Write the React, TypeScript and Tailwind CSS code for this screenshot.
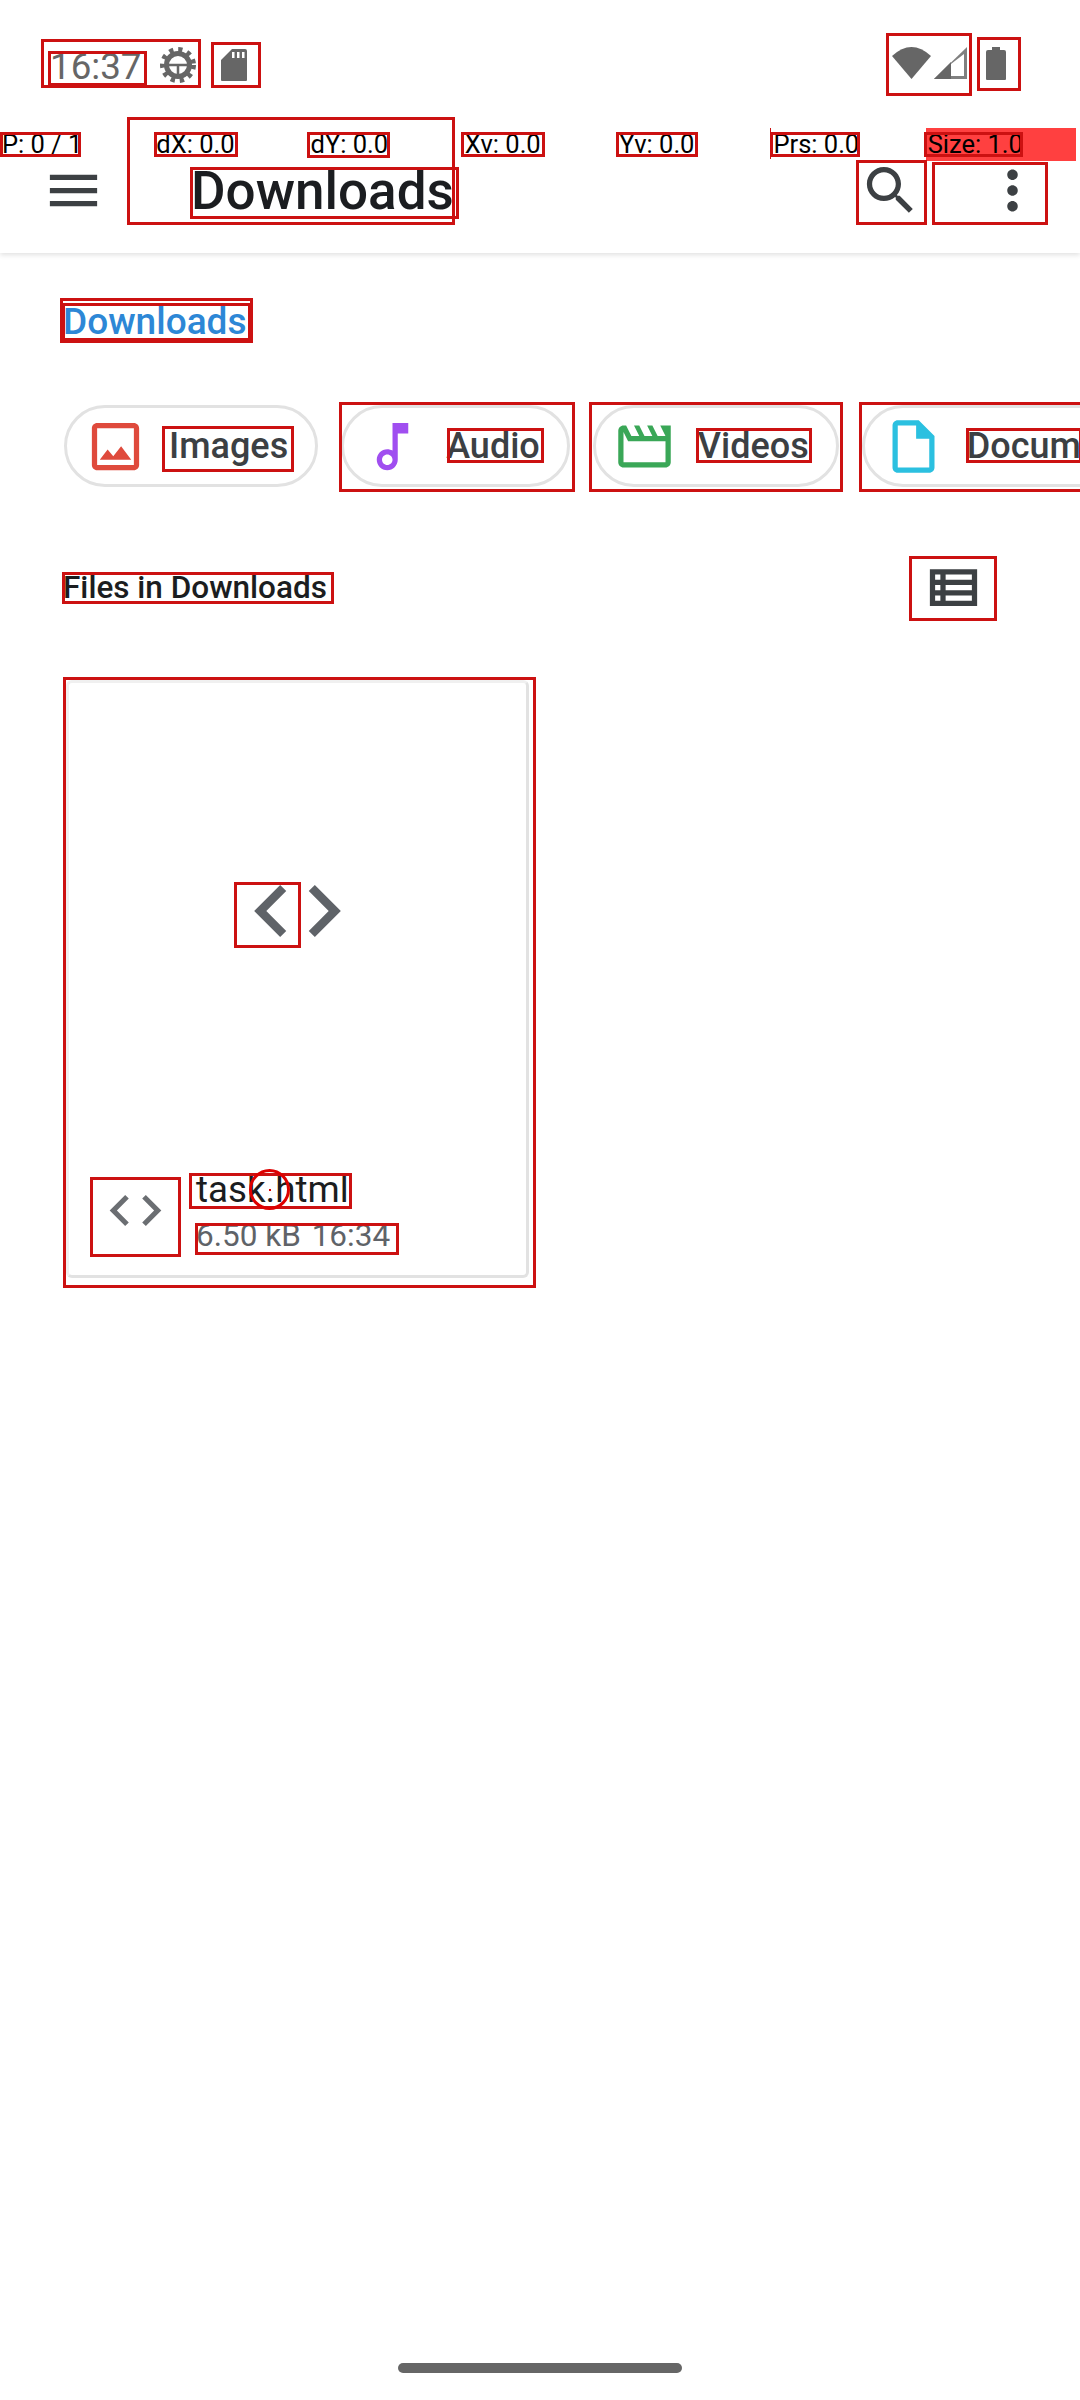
import React from "react";

const Icon: React.FC<{ d: string; className: string; box?: string }> = ({ d, className, box = "0 0 24 24" }) => (
  <svg viewBox={box} className={className} fill="currentColor">
    <path d={d} />
  </svg>
);

const CODE = "M9.4 16.6L4.8 12l4.6-4.6L8 6l-6 6 6 6 1.4-1.4zm5.2 0l4.6-4.6-4.6-4.6L16 6l6 6-6 6-1.4-1.4z";

const chips = [
  {
    label: "Images",
    color: "text-[#df4a3c]",
    d: "M19 5v14H5V5h14m0-2H5c-1.1 0-2 .9-2 2v14c0 1.1.9 2 2 2h14c1.1 0 2-.9 2-2V5c0-1.1-.9-2-2-2zM14.14 11.86l-3 3.87L9 13.14 6 17h12l-3.86-5.14z",
  },
  {
    label: "Audio",
    color: "text-[#a04ef0]",
    d: "M12 3l.01 10.55c-.59-.34-1.27-.55-2-.55C7.79 13 6 14.79 6 17s1.79 4 4 4 4-1.79 4-4V7h4V3h-6zm-1.99 16c-1.1 0-2-.9-2-2s.9-2 2-2 2 .9 2 2-.9 2-2 2z",
  },
  {
    label: "Videos",
    color: "text-[#3aa757]",
    d: "M4 6.47L5.76 10H20v8H4V6.47M22 4h-4l2 4h-3l-2-4h-2l2 4h-3l-2-4H8l2 4H7L5 4H4c-1.1 0-1.99.9-1.99 2L2 18c0 1.1.9 2 2 2h16c1.1 0 2-.9 2-2V4z",
  },
  {
    label: "Documents",
    color: "text-[#2bc0e0]",
    d: "M14 2H6c-1.1 0-1.99.9-1.99 2L4 20c0 1.1.89 2 1.99 2H18c1.1 0 2-.9 2-2V8l-6-6zM6 20V4h7v5h5v11H6z",
  },
];

const pointerCells = ["P: 0 / 1", "dX: 0.0", "dY: 0.0", "Xv: 0.0", "Yv: 0.0", "Prs: 0.0"];

// layout bounds drawn over the page
const boundsBoxes = [
  "left-[41px] top-[39px] w-[160px] h-[49px]",
  "left-[48px] top-[51px] w-[99px] h-[35px]",
  "left-[211px] top-[42px] w-[50px] h-[46px]",
  "left-[886px] top-[33px] w-[86px] h-[63px]",
  "left-[977px] top-[37px] w-[44px] h-[54px]",
  "left-[0px] top-[132px] w-[81px] h-[25px]",
  "left-[154px] top-[132px] w-[84px] h-[25px]",
  "left-[307px] top-[132px] w-[83px] h-[26px]",
  "left-[461px] top-[132px] w-[84px] h-[25px]",
  "left-[616px] top-[132px] w-[82px] h-[25px]",
  "left-[770px] top-[132px] w-[90px] h-[25px]",
  "left-[924px] top-[132px] w-[99px] h-[25px]",
  "left-[127px] top-[117px] w-[328px] h-[108px]",
  "left-[190px] top-[167px] w-[269px] h-[52px]",
  "left-[856px] top-[160px] w-[71px] h-[65px]",
  "left-[932px] top-[162px] w-[116px] h-[63px]",
  "left-[60px] top-[298px] w-[193px] h-[45px]",
  "left-[62px] top-[303px] w-[189px] h-[38px]",
  "left-[162px] top-[426px] w-[132px] h-[46px]",
  "left-[339px] top-[402px] w-[236px] h-[90px]",
  "left-[447px] top-[428px] w-[97px] h-[35px]",
  "left-[589px] top-[402px] w-[254px] h-[90px]",
  "left-[696px] top-[428px] w-[116px] h-[35px]",
  "left-[859px] top-[402px] w-[224px] h-[90px]",
  "left-[966px] top-[428px] w-[116px] h-[35px]",
  "left-[62px] top-[572px] w-[272px] h-[32px]",
  "left-[909px] top-[556px] w-[88px] h-[65px]",
  "left-[63px] top-[677px] w-[473px] h-[611px]",
  "left-[234px] top-[882px] w-[67px] h-[66px]",
  "left-[90px] top-[1177px] w-[91px] h-[80px]",
  "left-[189px] top-[1173px] w-[163px] h-[36px]",
  "left-[195px] top-[1223px] w-[204px] h-[32px]",
];

export default function App() {
  return (
    <div className="relative flex h-[2400px] w-[1080px] flex-col overflow-hidden bg-white font-['Roboto',sans-serif]">
      <header className="z-10 h-[253px] shrink-0 bg-white shadow-[0_2px_5px_rgba(0,0,0,0.12)]">
        {/* status bar */}
        <div className="flex h-[128px] items-start justify-between pt-[47px] pl-[50px] pr-[74px] text-[#666666]">
          <div className="flex items-start">
            <span className="mt-[2px] text-[36.75px] leading-[36px]">16:37</span>
            <svg viewBox="0 0 36 36" className="ml-[18px] h-[36px] w-[36px]" fill="none" stroke="currentColor">
              <circle cx="18" cy="18" r="11.500" strokeWidth="5" />
              <circle cx="18" cy="18" r="15.5" strokeWidth="5" strokeDasharray="4.2 4.9" />
              <path d="M6 18h24M18 18v12" strokeWidth="2.5" />
              <circle cx="13" cy="13" r="1.4" fill="#ffffff" stroke="none" />
              <circle cx="23" cy="13" r="1.4" fill="#ffffff" stroke="none" />
            </svg>
            <svg viewBox="0 0 26 32" className="ml-[25px] mt-[2px] h-[32px] w-[26px]" fill="currentColor">
              <path d="M11 0h13a2 2 0 0 1 2 2v29a1 1 0 0 1-1 1H1a1 1 0 0 1-1-1V11zM11 3v6h2.5V3zM16 3v6h2.5V3zM21 3v6h2.5V3z" fillRule="evenodd" />
            </svg>
          </div>
          <div className="flex items-start">
            <svg viewBox="0 0 39 32" className="h-[32px] w-[39px]" fill="currentColor">
              <path d="M0 9Q19.500-9 39 9L19.500 32Z" />
            </svg>
            <svg viewBox="0 0 33 32" className="ml-[3px] h-[32px] w-[33px]">
              <path d="M33 0V32H0Z" fill="#808080" />
              <path d="M17 15V32H0Z" fill="#666666" />
              <path d="M17 17L30 7V29H17Z" fill="#ffffff" />
            </svg>
            <svg viewBox="0 0 20 33" className="ml-[19px] h-[33px] w-[20px]" fill="currentColor">
              <path d="M6 0h8v3h4a2 2 0 0 1 2 2v27a1 1 0 0 1-1 1H1a1 1 0 0 1-1-1V5a2 2 0 0 1 2-2h4z" />
            </svg>
          </div>
        </div>
        {/* toolbar */}
        <div className="flex h-[125px] items-center pl-[42px] pr-[36px] text-[#3c4043]">
          <Icon className="h-[63px] w-[63px]" d="M3 18h18v-2H3v2zm0-5h18v-2H3v2zm0-7v2h18V6H3z" />
          <h1 className="ml-[86px] flex-1 pt-[2px] text-[53px] font-medium leading-none text-[#1b1d20]">Downloads</h1>
          <Icon
            className="h-[63px] w-[63px]"
            d="M15.5 14h-.79l-.28-.27C15.41 12.59 16 11.11 16 9.5 16 5.91 13.09 3 9.500 3S3 5.91 3 9.5 5.91 16 9.5 16c1.61 0 3.09-.59 4.23-1.57l.27.28v.79l5 4.99L20.49 19l-4.99-5zm-6 0C7.01 14 5 11.99 5 9.5S7.01 5 9.5 5 14 7.01 14 9.5 11.99 14 9.500 14z"
          />
          <Icon
            className="ml-[59px] h-[63px] w-[63px]"
            d="M12 8c1.1 0 2-.9 2-2s-.9-2-2-2-2 .9-2 2 .9 2 2 2zm0 2c-1.1 0-2 .9-2 2s.9 2 2 2 2-.9 2-2-.9-2-2-2zm0 6c-1.1 0-2 .9-2 2s.9 2 2 2 2-.9 2-2-.9-2-2-2z"
          />
        </div>
      </header>

      <main className="flex flex-1 flex-col">
        <div className="pl-[63px] pt-[50px] text-[37px] font-medium leading-[38px] text-[#2d87d6]">Downloads</div>

        <div className="mt-[64px] flex h-[82px] gap-[23px] overflow-hidden pl-[64px]">
          {chips.map((chip) => (
            <div
              key={chip.label}
              className="flex shrink-0 items-center rounded-full border-[3px] border-[#e2e2e2] pl-[17px] pr-[27px]"
            >
              <Icon className={`h-[63px] w-[63px] ${chip.color}`} d={chip.d} />
              <span className="ml-[22px] text-[36px] font-medium text-[#3c4043]">{chip.label}</span>
            </div>
          ))}
        </div>

        <div className="mt-[69px] flex h-[63px] items-center justify-between pl-[63px] pr-[95px]">
          <h2 className="text-[31.5px] font-medium text-[#1b1d20]">Files in Downloads</h2>
          <Icon
            className="h-[63px] w-[63px] text-[#3c4043]"
            d="M3 5v14h18V5H3zm4 2v2H5V7h2zm-2 6v-2h2v2H5zm0 2h2v2H5v-2zm14 2H9v-2h10v2zm0-4H9v-2h10v2zm0-4H9V7h10v2z"
          />
        </div>

        <article className="ml-[66px] mt-[61px] flex h-[598px] w-[463px] flex-col rounded-[6px] border-[3px] border-[#e2e2e2] border-l-[#f0f0f0] border-t-[#f0f0f0]">
          <div className="flex h-[455px] items-center justify-center">
            <Icon box="2 6 20 12" className="h-[52px] w-[87px] text-[#5f6368]" d={CODE} />
          </div>
          <div className="flex items-start">
            <Icon box="2 6 20 12" className="ml-[40px] mt-[57px] h-[31px] w-[53px] text-[#6b6e72]" d={CODE} />
            <div className="ml-[34px] mt-[30px]">
              <div className="text-[36.75px] leading-[44px] text-[#1b1d20]">task.html</div>
              <div className="mt-[6px] text-[31.5px] leading-[36px] text-[#5f6368]">
                6.50 kB <span className="ml-[3px]">16:34</span>
              </div>
            </div>
          </div>
        </article>

        <div className="mb-[27px] mt-auto h-[10px] w-[284px] self-center rounded-full bg-[#666666]" />
      </main>

      {/* pointer location strip */}
      <div className="absolute left-0 top-[128px] z-20 grid h-[31px] w-[1080px] grid-cols-7 text-[25.5px] leading-[33px] text-black">
        {pointerCells.map((cell) => (
          <div key={cell} className="bg-white pl-[2px]">{cell}</div>
        ))}
        <div className="mr-[4px] bg-[#ff4040] pl-[2px]">Size: 1.0</div>
      </div>
      <div className="absolute left-[770px] top-[128px] z-20 h-[31px] w-px bg-[#cc1111]" />

      {boundsBoxes.map((box) => (
        <div key={box} className={`absolute z-30 border-[3px] border-[#cc1111] ${box}`} />
      ))}
      <div className="absolute left-[249px] top-[1169px] z-30 flex h-[41px] w-[41px] items-center justify-center rounded-full border-[3px] border-[#dd0000]">
        <div className="h-[2px] w-[2px] bg-[#dd0000]" />
      </div>
    </div>
  );
}
